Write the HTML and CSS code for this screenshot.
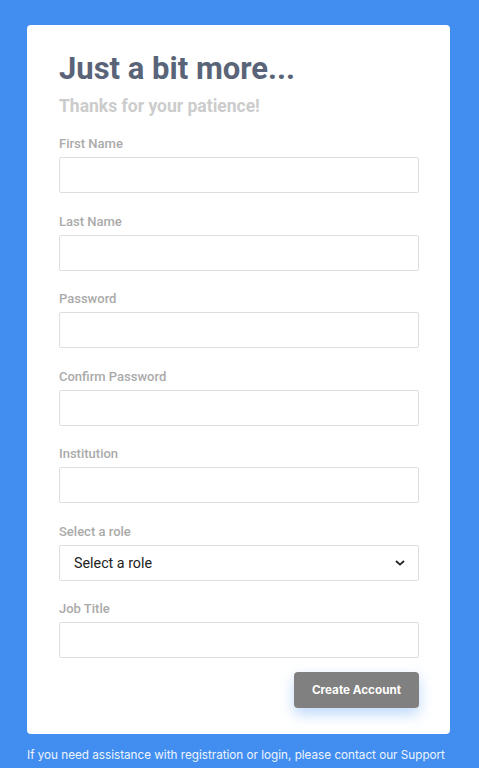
FILE: index.html
```html
<!DOCTYPE html>
<html lang="en">
<head>
<meta charset="utf-8">
<title>Just a bit more...</title>
<link rel="stylesheet" href="styles.css">
</head>
<body>
<main class="page">
  <section class="card">
    <h1 class="title">Just a bit more...</h1>
    <p class="subtitle">Thanks for your patience!</p>
    <form class="form">
      <div class="field">
        <label class="label">First Name</label>
        <input class="input" type="text">
      </div>
      <div class="field">
        <label class="label">Last Name</label>
        <input class="input" type="text">
      </div>
      <div class="field">
        <label class="label">Password</label>
        <input class="input" type="password">
      </div>
      <div class="field">
        <label class="label">Confirm Password</label>
        <input class="input" type="password">
      </div>
      <div class="field">
        <label class="label">Institution</label>
        <input class="input" type="text">
      </div>
      <div class="field">
        <label class="label">Select a role</label>
        <div class="select">
          <span class="select-text">Select a role</span>
          <svg class="chevron" width="10" height="6" viewBox="0 0 10 6"><path d="M1 1l4 3.6L9 1" fill="none" stroke="#222" stroke-width="1.8"/></svg>
        </div>
      </div>
      <div class="field">
        <label class="label">Job Title</label>
        <input class="input" type="text">
      </div>
      <div class="actions">
        <button class="button" type="button">Create Account</button>
      </div>
    </form>
  </section>
  <p class="footer">If you need assistance with registration or login, please contact our Support</p>
</main>
</body>
</html>
```

FILE: styles.css
```css
* { box-sizing: border-box; }
html, body {
  margin: 0;
  padding: 0;
  background: #418ef0;
  height: 100%;
  overflow: hidden;
}
body {
  font-family: Roboto, "Liberation Sans", sans-serif;
}
.page {
  padding: 25px 29px 0 27px;
}
.card {
  background: #fff;
  border-radius: 4px;
  padding: 25px 31px 26px 32px;
}
.title {
  margin: 0;
  font-size: 31px;
  line-height: 38px;
  font-weight: 700;
  color: #5a6478;
}
.subtitle {
  margin: 7px 0 0;
  font-size: 17.5px;
  line-height: 22px;
  font-weight: 700;
  color: #cccccc;
}
.form {
  margin-top: 18px;
  display: flex;
  flex-direction: column;
}
.field {
  display: flex;
  flex-direction: column;
  margin-bottom: 19.5px;
}
.label {
  font-size: 13px;
  line-height: 18px;
  font-weight: 500;
  color: #aaaaaa;
  margin-bottom: 4px;
}
.input, .select {
  height: 36px;
  width: 100%;
  border: 1px solid #dedede;
  border-radius: 2px;
  background: #fff;
  outline: none;
}
.select {
  display: flex;
  align-items: center;
  justify-content: space-between;
  padding: 0 13px 0 14px;
}
.select-text {
  font-size: 14.3px;
  color: #222;
}
.actions {
  display: flex;
  justify-content: flex-end;
  margin-top: -5.5px;
}
.button {
  height: 36px;
  padding: 0 18px;
  border: none;
  border-radius: 4px;
  background: #808080;
  color: #fff;
  font-family: Inter, Roboto, sans-serif;
  font-size: 11.7px;
  font-weight: 700;
  box-shadow: 0 6px 14px rgba(65, 142, 240, 0.35);
}
.footer {
  margin: 14px 0 0;
  font-family: Inter, Roboto, sans-serif;
  font-size: 11.7px;
  color: #eef4ff;
  white-space: nowrap;
}
```
